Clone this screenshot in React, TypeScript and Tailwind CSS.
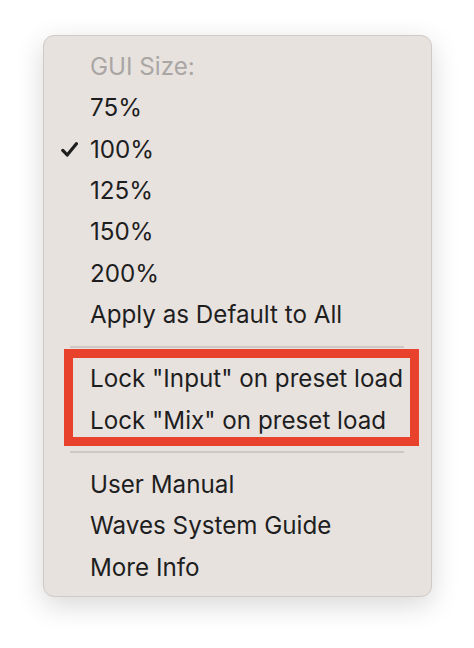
const sizes = ["75%", "100%", "125%", "150%", "200%"];

function Check() {
  return (
    <svg viewBox="0 0 17 15" className="h-[15px] w-[17px]" fill="none">
      <path
        d="M1.8 8.4 L6.2 13 L15.4 1.8"
        stroke="#1e1e1e"
        strokeWidth="3.2"
        strokeLinecap="round"
        strokeLinejoin="round"
      />
    </svg>
  );
}

function Row({ label, checked, muted }: { label: string; checked?: boolean; muted?: boolean }) {
  return (
    <div className="flex h-[41.33px] items-center">
      <div className="flex w-[46px] shrink-0 justify-end pr-[12px]">{checked && <Check />}</div>
      <span className={muted ? "text-[#a9a6a4]" : "text-[#1e1e1e]"}>{label}</span>
    </div>
  );
}

function Separator() {
  return (
    <div className="py-[10.5px] pl-[26px] pr-[27px]">
      <div className="h-[2px] bg-[#cdc8c6]" />
    </div>
  );
}

export default function App() {
  return (
    <div className="min-h-screen bg-white pt-[35px] pl-[43px]">
      <div
        className="w-[389px] rounded-[11px] border border-[#cfcac7] bg-[#e8e2df] pt-[10px] pb-[8px] text-[24.2px] leading-[41px] shadow-[0_8px_28px_rgba(0,0,0,0.16)]"
        style={{ fontFamily: "Inter, 'Liberation Sans', sans-serif" }}
      >
        <Row label="GUI Size:" muted />
        {sizes.map((s) => (
          <Row key={s} label={s} checked={s === "100%"} />
        ))}
        <Row label="Apply as Default to All" />
        <Separator />
        <div className="relative">
          <Row label={'Lock "Input" on preset load'} />
          <Row label={'Lock "Mix" on preset load'} />
          <div className="pointer-events-none absolute top-[-9px] left-[20px] h-[97px] w-[355px] border-[9.5px] border-[#e8412c]" />
        </div>
        <Separator />
        <Row label="User Manual" />
        <Row label="Waves System Guide" />
        <Row label="More Info" />
      </div>
    </div>
  );
}
